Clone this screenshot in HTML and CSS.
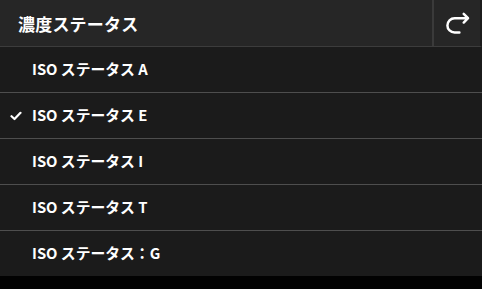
FILE: index.html
```html
<!DOCTYPE html>
<html lang="ja">
<head>
<meta charset="utf-8">
<link rel="stylesheet" href="styles.css">
</head>
<body>
<div class="panel">
  <header class="header">
    <div class="title">濃度ステータス</div>
    <button class="back" type="button" aria-label="戻る">
      <svg width="48" height="46" viewBox="432 0 48 46">
        <path d="M458.5 33 H453.5 A7.5 7.5 0 0 1 453.5 18 H467.5 M463 13.5 L467.5 18 L463 22.5" fill="none" stroke="#fff" stroke-width="2.6" stroke-linecap="round" stroke-linejoin="round"/>
      </svg>
    </button>
  </header>
  <ul class="list">
    <li class="item"><span class="check"></span><span class="label">ISO ステータス A</span></li>
    <li class="item selected"><span class="check">
      <svg width="12" height="10" viewBox="0 0 12 10"><path d="M1.5 5.2 L4.5 8 L10.5 1.8" fill="none" stroke="#fff" stroke-width="2.2" stroke-linecap="round" stroke-linejoin="round"/></svg>
    </span><span class="label">ISO ステータス E</span></li>
    <li class="item"><span class="check"></span><span class="label">ISO ステータス I</span></li>
    <li class="item"><span class="check"></span><span class="label">ISO ステータス T</span></li>
    <li class="item"><span class="check"></span><span class="label">ISO ステータス：G</span></li>
  </ul>
</div>
</body>
</html>
```
FILE: styles.css
```css
html, body {
  margin: 0;
  padding: 0;
  background: #020202;
}
body {
  width: 482px;
  height: 289px;
  overflow: hidden;
  font-family: "Noto Sans CJK JP", "Noto Sans", sans-serif;
  color: #ffffff;
}
.panel {
  display: flex;
  flex-direction: column;
}
.header {
  display: flex;
  align-items: stretch;
  height: 46px;
  background: #262626;
  border-bottom: 1px solid #3c3c3c;
  border-right: 2px solid #1c1c1c;
}
.title {
  flex: 1;
  display: flex;
  align-items: center;
  padding-left: 18px;
  font-size: 17px;
  font-weight: 700;
  letter-spacing: 0.2px;
}
.back {
  width: 48px;
  padding: 0;
  margin: 0;
  border: none;
  border-left: 2px solid #3a3a3a;
  background: #262626;
  display: flex;
  align-items: center;
  justify-content: center;
}
.back svg {
  display: block;
}
.list {
  list-style: none;
  margin: 0;
  padding: 0;
  background: #1b1b1b;
}
.item {
  display: flex;
  align-items: center;
  height: 45px;
  border-top: 1px solid #4e4e4e;
  font-size: 14.8px;
  font-weight: 700;
}
.item:first-child {
  border-top: none;
}
.check {
  width: 32px;
  display: flex;
  align-items: center;
  justify-content: flex-start;
  padding-left: 10px;
  box-sizing: border-box;
}
.label {
  line-height: 1;
}
```
